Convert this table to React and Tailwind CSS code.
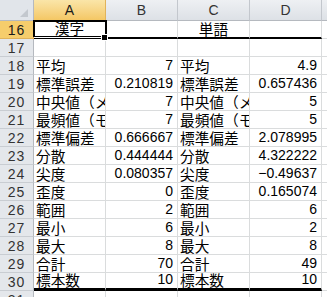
import React from 'react'

const rows = [
  [16, '漢字', '', '単語', ''],
  [17, '', '', '', ''],
  [18, '平均', '7', '平均', '4.9'],
  [19, '標準誤差', '0.210819', '標準誤差', '0.657436'],
  [20, '中央値（メジアン）', '7', '中央値（メジアン）', '5'],
  [21, '最頻値（モード）', '7', '最頻値（モード）', '5'],
  [22, '標準偏差', '0.666667', '標準偏差', '2.078995'],
  [23, '分散', '0.444444', '分散', '4.322222'],
  [24, '尖度', '0.080357', '尖度', '−0.49637'],
  [25, '歪度', '0', '歪度', '0.165074'],
  [26, '範囲', '2', '範囲', '6'],
  [27, '最小', '6', '最小', '2'],
  [28, '最大', '8', '最大', '8'],
  [29, '合計', '70', '合計', '49'],
  [30, '標本数', '10', '標本数', '10'],
  [31, '', '', '', ''],
]

const jp = "font-['Noto_Sans_CJK_JP',sans-serif]"
const num = "font-['Liberation_Sans',sans-serif]"

const ColHead = ({ label, active }) => (
  <div
    className={`flex items-center justify-center border-r border-b text-[14px] pt-[1px] ${num} ${
      active
        ? 'bg-gradient-to-b from-[#fae5a8] to-[#f4c764] border-r-[#e1b35a] border-b-[#e8a544] text-[#1a1a1a]'
        : 'bg-gradient-to-b from-[#eef0f3] to-[#dde1e6] border-r-[#c3c7cd] border-b-[#b5b9bf] text-[#333]'
    }`}
  >
    {label}
  </div>
)

const RowHead = ({ n, active }) => (
  <div
    className={`flex items-center justify-center border-r border-b text-[14px] tracking-[1px] pt-[1px] ${num} ${
      active
        ? 'bg-[#f6cd6c] border-r-[#e8a544] border-b-[#e1b35a] text-[#1a1a1a]'
        : 'bg-[#e4e7eb] border-r-[#b5b9bf] border-b-[#c9cdd2] text-[#333]'
    }`}
  >
    {n}
  </div>
)

// Excel-style cell: bottom aligned, text clipped at the right gridline
const Cell = ({ value, isNum, center, bottom }) => (
  <div
    className={`flex items-end overflow-x-clip whitespace-nowrap bg-white border-r border-[#dadcdd] leading-[17px] text-black ${
      bottom || 'border-b'
    } ${
      isNum
        ? `justify-end pr-[4px] text-[14px] ${num}`
        : center
        ? `justify-center text-[14.67px] ${jp}`
        : `pl-[2px] text-[14.67px] ${jp}`
    }`}
  >
    {value}
  </div>
)

export default function App() {
  return (
    <div className="relative w-[327px] h-[297px] overflow-hidden bg-white">
      <div className="grid grid-cols-[34px_72px_72px_72px_72px_1fr] grid-rows-[21px_repeat(16,18px)]">
        <div className="relative bg-[#e1e5ea] border-r border-b border-r-[#b5b9bf] border-b-[#b5b9bf]">
          <svg className="absolute right-[5px] bottom-[3px]" width="8" height="8" viewBox="0 0 8 8">
            <polygon points="8,0 8,8 0,8" fill="#c3c8ce" />
          </svg>
        </div>
        <ColHead label="A" active />
        <ColHead label="B" />
        <ColHead label="C" />
        <ColHead label="D" />
        <div className="bg-gradient-to-b from-[#eef0f3] to-[#dde1e6] border-b border-b-[#b5b9bf]" />

        {rows.map(([n, a, b, c, d]) => {
          let bA, bRest
          if (n === 16) {
            bA = 'border-b-[3px] border-double border-b-black'
            bRest = 'border-b-2 border-b-black'
          } else if (n === 30) {
            bA = bRest = 'border-b-[3px] border-b-black'
          }
          return (
            <React.Fragment key={n}>
              <RowHead n={n} active={n === 16} />
              <Cell value={a} center={n === 16} bottom={bA} />
              <Cell value={b} isNum bottom={bRest} />
              <Cell value={c} center={n === 16} bottom={bRest} />
              <Cell value={d} isNum bottom={bRest} />
              <div className="bg-white border-b border-[#dadcdd]" />
            </React.Fragment>
          )
        })}
      </div>

      {/* selected cell A16 */}
      <div className="absolute left-[33px] top-[20px] w-[74px] h-[17px] border-2 border-b-0 border-black" />
      <div className="absolute left-[101px] top-[34px] w-[7px] h-[7px] bg-white p-[1px]">
        <div className="w-full h-full bg-black" />
      </div>
    </div>
  )
}
